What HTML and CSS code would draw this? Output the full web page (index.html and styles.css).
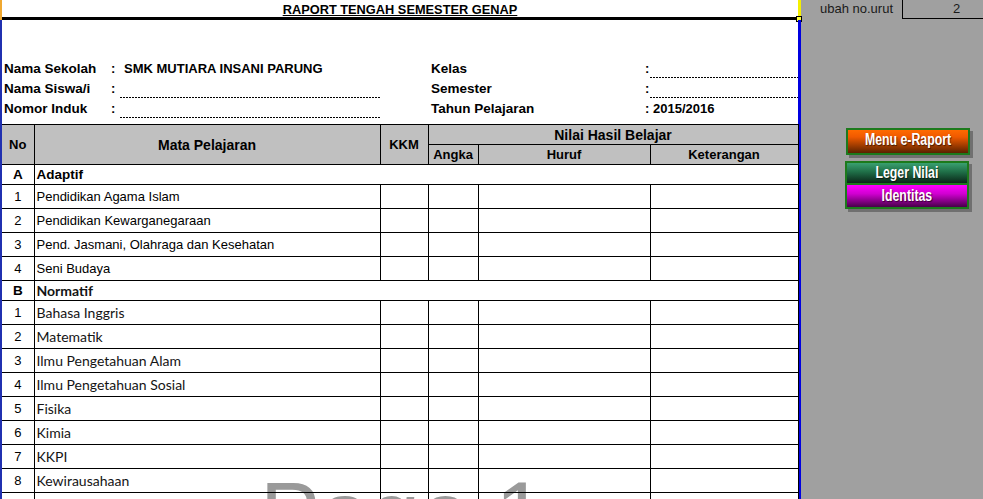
FILE: index.html
```html
<!DOCTYPE html>
<html>
<head>
<meta charset="utf-8">
<link rel="stylesheet" href="styles.css">
</head>
<body>
<div class="page">
  <div class="sheet">
    <header class="head">
      <div class="head-in">
        <h1 class="title">RAPORT TENGAH SEMESTER GENAP</h1>
        <span class="handle"></span>
      </div>
    </header>
    <div class="body">
      <div class="info">
        <div class="lbl">Nama Sekolah</div><div class="col">:</div><div class="val school">SMK MUTIARA INSANI PARUNG</div><div></div>
        <div class="lbl r">Kelas</div><div class="col">:</div><div class="val dots"></div>

        <div class="lbl">Nama Siswa/i</div><div class="col">:</div><div class="val dots"></div><div></div>
        <div class="lbl r">Semester</div><div class="col">:</div><div class="val dots"></div>

        <div class="lbl">Nomor Induk</div><div class="col">:</div><div class="val dots"></div><div></div>
        <div class="lbl r">Tahun Pelajaran</div><div class="col">:</div><div class="val year">2015/2016</div>
      </div>

      <table class="grid">
        <colgroup>
          <col class="c-no"><col class="c-mp"><col class="c-kkm"><col class="c-ang"><col class="c-hur"><col class="c-ket">
        </colgroup>
        <thead>
          <tr class="h1">
            <th rowspan="2">No</th>
            <th rowspan="2" class="big">Mata Pelajaran</th>
            <th rowspan="2">KKM</th>
            <th colspan="3" class="big">Nilai Hasil Belajar</th>
          </tr>
          <tr class="h2">
            <th>Angka</th><th>Huruf</th><th>Keterangan</th>
          </tr>
        </thead>
        <tbody>
          <tr class="sec"><td class="no">A</td><td colspan="5" class="sname">Adaptif</td></tr>
          <tr class="row"><td class="no">1</td><td class="mp">Pendidikan Agama Islam</td><td></td><td></td><td></td><td></td></tr>
          <tr class="row"><td class="no">2</td><td class="mp">Pendidikan Kewarganegaraan</td><td></td><td></td><td></td><td></td></tr>
          <tr class="row"><td class="no">3</td><td class="mp">Pend. Jasmani, Olahraga dan Kesehatan</td><td></td><td></td><td></td><td></td></tr>
          <tr class="row"><td class="no">4</td><td class="mp">Seni Budaya</td><td></td><td></td><td></td><td></td></tr>
          <tr class="sec"><td class="no">B</td><td colspan="5" class="sname cal">Normatif</td></tr>
          <tr class="row"><td class="no">1</td><td class="mp cal">Bahasa Inggris</td><td></td><td></td><td></td><td></td></tr>
          <tr class="row"><td class="no">2</td><td class="mp cal">Matematik</td><td></td><td></td><td></td><td></td></tr>
          <tr class="row"><td class="no">3</td><td class="mp cal">Ilmu Pengetahuan Alam</td><td></td><td></td><td></td><td></td></tr>
          <tr class="row"><td class="no">4</td><td class="mp cal">Ilmu Pengetahuan Sosial</td><td></td><td></td><td></td><td></td></tr>
          <tr class="row"><td class="no">5</td><td class="mp cal">Fisika</td><td></td><td></td><td></td><td></td></tr>
          <tr class="row"><td class="no">6</td><td class="mp cal">Kimia</td><td></td><td></td><td></td><td></td></tr>
          <tr class="row"><td class="no">7</td><td class="mp cal">KKPI</td><td></td><td></td><td></td><td></td></tr>
          <tr class="row"><td class="no">8</td><td class="mp cal">Kewirausahaan</td><td></td><td></td><td></td><td></td></tr>
          <tr class="row"><td class="no"></td><td class="mp cal"></td><td></td><td></td><td></td><td></td></tr>
        </tbody>
      </table>
      <div class="watermark">Page 1</div>
    </div>
  </div>

  <aside class="side">
    <div class="topbar">
      <div class="tb-label">ubah no.urut</div>
      <div class="tb-box">2</div>
    </div>
    <div class="buttons">
      <div class="btn btn-menu"><span class="btn-txt">Menu e-Raport</span></div>
      <div class="btn-group">
        <div class="btn btn-leger"><span class="btn-txt">Leger Nilai</span></div>
        <div class="btn btn-ident"><span class="btn-txt">Identitas</span></div>
      </div>
    </div>
  </aside>
</div>
</body>
</html>
```

FILE: styles.css
```css
html, body {
  margin: 0;
  padding: 0;
}
body {
  background: #a0a0a0;
  font-family: "Liberation Sans", Arial, sans-serif;
  font-size: 13px;
  color: #000;
  height: 499px;
  overflow: hidden;
}
.page {
  display: flex;
  height: 499px;
}
.sheet {
  width: 801px;
  flex: none;
  display: flex;
  flex-direction: column;
  background: #fff;
}
.head {
  height: 20px;
  border-left: 2px solid #f0a830;
  border-right: 3px solid #f4f000;
}
.head-in {
  height: 17px;
  border-bottom: 3px solid #000;
  position: relative;
  display: flex;
  justify-content: center;
}
.title {
  margin: 0;
  padding-top: 1px;
  font-size: 12.8px;
  line-height: 17px;
  font-weight: bold;
  text-decoration: underline;
  text-underline-offset: 1px;
}
.handle {
  position: absolute;
  right: -4px;
  bottom: -5px;
  width: 4px;
  height: 4px;
  background: #ffff40;
  border: 1px solid #000;
}
.body {
  flex: 1;
  border-left: 2px solid #2030b0;
  border-right: 3px solid #0000e0;
  position: relative;
  padding-top: 38px;
}
.info {
  display: grid;
  grid-template-columns: 109px 9px 261px 50px 214px 5px 148px;
  grid-auto-rows: 20px;
  font-weight: bold;
}
.info > div {
  display: flex;
  align-items: flex-end;
  line-height: 16px;
  padding-bottom: 1px;
  box-sizing: border-box;
  white-space: nowrap;
}
.lbl {
  padding-left: 2px;
  font-size: 13.5px;
}
.lbl.r {
  padding-left: 0;
}
.col {
  font-size: 13px;
}
.val {
  font-size: 13px;
}
.school {
  padding-left: 4px;
}
.year {
  padding-left: 3px;
}
.dots {
  background-image: repeating-linear-gradient(to right, #000 0 2px, transparent 2px 3px);
  background-size: 100% 1px;
  background-position: left bottom;
  background-repeat: no-repeat;
}
.grid {
  position: relative;
  z-index: 1;
  margin-top: 6px;
  width: 796px;
  table-layout: fixed;
  border-collapse: collapse;
}
.c-no { width: 32px; }
.c-mp { width: 346px; }
.c-kkm { width: 48px; }
.c-ang { width: 50px; }
.c-hur { width: 172px; }
.c-ket { width: 148px; }
.grid th,
.grid td {
  border: 1px solid #000;
  padding: 0;
  white-space: nowrap;
  overflow: hidden;
}
.grid tr > :first-child {
  border-left: none;
}
.grid th {
  background: #c0c0c0;
  font-weight: bold;
  font-size: 13px;
}
.grid th.big {
  font-size: 14px;
}
.h1, .h2, .sec {
  height: 20px;
}
.row {
  height: 24px;
}
.no {
  text-align: center;
}
.sec .no {
  font-weight: bold;
  font-size: 13.5px;
}
.sname {
  font-weight: bold;
  font-size: 13.5px;
  padding-left: 2px !important;
}
.mp {
  padding-left: 2px !important;
}
.cal {
  font-family: Lato, "Open Sans", sans-serif;
  font-size: 14px;
  color: #141414;
}
.watermark {
  position: absolute;
  left: 258px;
  top: 449px;
  font-size: 90px;
  line-height: 90px;
  color: #9a9a9a;
  white-space: nowrap;
  z-index: 0;
}
.side {
  flex: 1;
  background: #a0a0a0;
}
.topbar {
  display: flex;
  height: 19px;
}
.tb-label {
  width: 101px;
  padding-left: 19px;
  box-sizing: border-box;
  line-height: 18px;
  color: #1a1a1a;
}
.tb-box {
  flex: 1;
  border-left: 1px solid #000;
  border-bottom: 1px solid #000;
  line-height: 18px;
  padding-left: 50px;
  color: #1a1a1a;
}
.buttons {
  padding-left: 44px;
  margin-top: 109px;
  display: flex;
  flex-direction: column;
  gap: 6px;
}
.btn {
  box-sizing: border-box;
  width: 124px;
  border: 2px solid #1c7a1c;
  color: #fff;
  font-family: "Liberation Sans", Arial, sans-serif;
  font-weight: bold;
  font-size: 16px;
  line-height: 18px;
  text-align: center;
  text-shadow: 1px 1px 1px rgba(0,0,0,0.6);
  display: flex;
  align-items: center;
  justify-content: center;
}
.btn-txt {
  display: inline-block;
  white-space: nowrap;
  transform: scaleX(0.77);
}
.btn-menu {
  height: 27px;
  margin-left: 1px;
  background: linear-gradient(#ff6a00, #f05a00 30%, #5a2200);
  box-shadow: 3px 3px 0 #707070;
  padding-bottom: 3px;
}
.btn-group {
  display: flex;
  flex-direction: column;
  width: 124px;
  box-shadow: 3px 3px 0 #707070;
}
.btn-leger {
  height: 23px;
  background: linear-gradient(#3aa070, #1f6e47 45%, #0a2618);
  border-bottom: 1px solid #1c7a1c;
}
.btn-ident {
  height: 25px;
  background: linear-gradient(#ff00ff, #d000d0 40%, #48004a);
  border-top: 1px solid #1c7a1c;
}
```
